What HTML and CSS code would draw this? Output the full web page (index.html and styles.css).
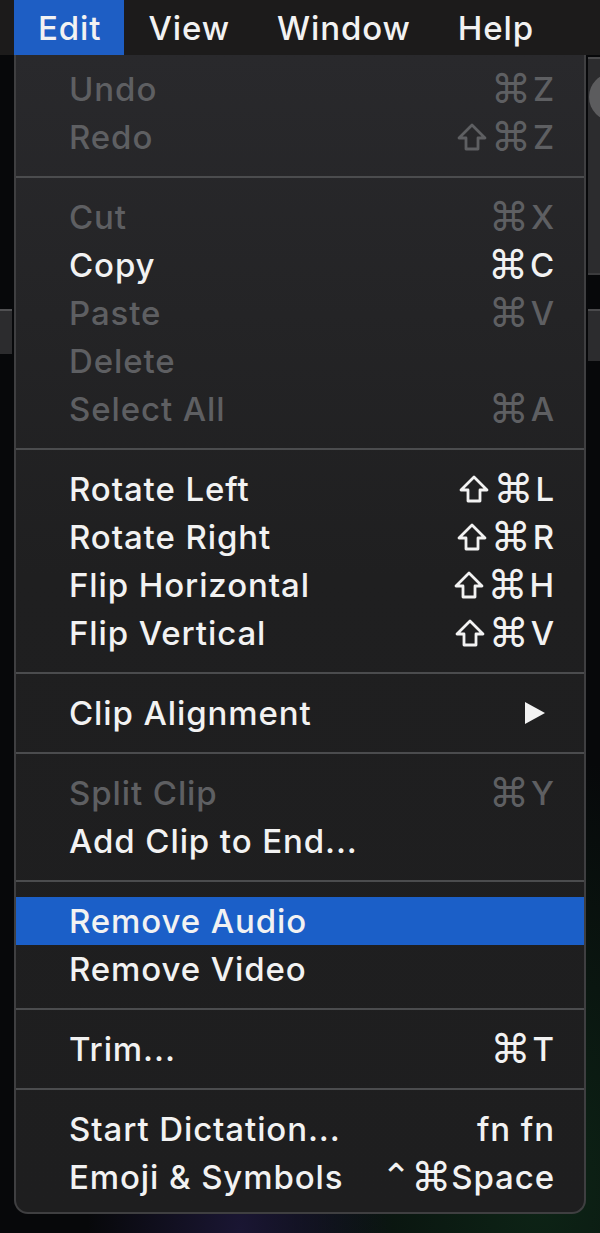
FILE: index.html
```html
<!DOCTYPE html>
<html lang="en">
<head>
<meta charset="UTF-8">
<meta name="viewport" content="width=device-width, initial-scale=1.0">
<title>Edit Menu</title>
<link rel="stylesheet" href="styles.css">
</head>
<body>
  <!-- bits of the windows behind the menu -->
  <div class="desktop">
    <div class="win win-left"></div>
    <div class="win win-right-top"><span class="knob"></span></div>
    <div class="win win-right-mid"></div>
    <div class="win win-right-low"></div>
    <div class="glow"></div>
  </div>

  <div class="menubar">
    <span class="menubar-item active">Edit</span>
    <span class="menubar-item">View</span>
    <span class="menubar-item">Window</span>
    <span class="menubar-item">Help</span>
  </div>

  <div class="menu">
    <div class="item disabled"><span class="label">Undo</span><span class="keys"><span class="cmd">⌘</span>Z</span></div>
    <div class="item disabled"><span class="label">Redo</span><span class="keys"><svg class="shift" width="30" height="28" viewBox="0 0 30 28"><path d="M15 2 L28 15 L21 15 L21 26 L9 26 L9 15 L2 15 Z"/></svg><span class="cmd">⌘</span>Z</span></div>
    <div class="sep"></div>
    <div class="item disabled"><span class="label">Cut</span><span class="keys"><span class="cmd">⌘</span>X</span></div>
    <div class="item"><span class="label">Copy</span><span class="keys"><span class="cmd">⌘</span>C</span></div>
    <div class="item disabled"><span class="label">Paste</span><span class="keys"><span class="cmd">⌘</span>V</span></div>
    <div class="item disabled"><span class="label">Delete</span></div>
    <div class="item disabled"><span class="label">Select All</span><span class="keys"><span class="cmd">⌘</span>A</span></div>
    <div class="sep"></div>
    <div class="item"><span class="label">Rotate Left</span><span class="keys"><svg class="shift" width="30" height="28" viewBox="0 0 30 28"><path d="M15 2 L28 15 L21 15 L21 26 L9 26 L9 15 L2 15 Z"/></svg><span class="cmd">⌘</span>L</span></div>
    <div class="item"><span class="label">Rotate Right</span><span class="keys"><svg class="shift" width="30" height="28" viewBox="0 0 30 28"><path d="M15 2 L28 15 L21 15 L21 26 L9 26 L9 15 L2 15 Z"/></svg><span class="cmd">⌘</span>R</span></div>
    <div class="item"><span class="label">Flip Horizontal</span><span class="keys"><svg class="shift" width="30" height="28" viewBox="0 0 30 28"><path d="M15 2 L28 15 L21 15 L21 26 L9 26 L9 15 L2 15 Z"/></svg><span class="cmd">⌘</span>H</span></div>
    <div class="item"><span class="label">Flip Vertical</span><span class="keys"><svg class="shift" width="30" height="28" viewBox="0 0 30 28"><path d="M15 2 L28 15 L21 15 L21 26 L9 26 L9 15 L2 15 Z"/></svg><span class="cmd">⌘</span>V</span></div>
    <div class="sep"></div>
    <div class="item"><span class="label">Clip Alignment</span>
      <svg class="arrow" width="22" height="24" viewBox="0 0 22 24"><path d="M1 1 L21 12 L1 23 Z" fill="#f2f2f2"/></svg>
    </div>
    <div class="sep"></div>
    <div class="item disabled"><span class="label">Split Clip</span><span class="keys"><span class="cmd">⌘</span>Y</span></div>
    <div class="item"><span class="label">Add Clip to End...</span></div>
    <div class="sep"></div>
    <div class="item selected"><span class="label">Remove Audio</span></div>
    <div class="item"><span class="label">Remove Video</span></div>
    <div class="sep"></div>
    <div class="item"><span class="label">Trim...</span><span class="keys"><span class="cmd">⌘</span>T</span></div>
    <div class="sep"></div>
    <div class="item"><span class="label">Start Dictation...</span><span class="keys">fn fn</span></div>
    <div class="item"><span class="label">Emoji &amp; Symbols</span><span class="keys"><span class="ctrl">⌃</span><span class="cmd tight">⌘</span>Space</span></div>
  </div>
</body>
</html>
```

FILE: styles.css
```css
body {
  margin: 0;
  height: 1233px;
  background-color: #07080a;
  font-family: Inter, "Liberation Sans", sans-serif;
  font-size: 33px;
  letter-spacing: 0.9px;
  color: #f2f2f2;
  position: relative;
  overflow: hidden;
}

/* windows peeking out behind the menu */
.desktop .win {
  position: absolute;
  background-color: #2c2c2e;
}

.win-left {
  left: 0;
  top: 309px;
  width: 12px;
  height: 43px;
  border-top: 2px solid #505052;
}

.win-right-top {
  left: 588px;
  top: 57px;
  width: 12px;
  height: 96px;
  border-top: 2px solid #4a4a4c;
  overflow: hidden;
}

.knob {
  position: absolute;
  left: 1px;
  top: 14px;
  width: 48px;
  height: 48px;
  border-radius: 50%;
  background-color: #5c5c5e;
}

.win-right-mid {
  left: 588px;
  top: 155px;
  width: 12px;
  height: 118px;
  background-color: #1c1c1e;
  border-bottom: 2px solid #3c3c3e;
}

.win-right-low {
  left: 588px;
  top: 309px;
  width: 12px;
  height: 50px;
  border-top: 2px solid #4a4a4c;
}

.glow {
  position: absolute;
  left: 0;
  top: 420px;
  width: 600px;
  height: 813px;
  background: radial-gradient(ellipse at 40% 100%, #1a1633 0%, transparent 30%),
              radial-gradient(ellipse at 90% 95%, #0d2416 0%, transparent 40%);
}

/* top menu bar */
.menubar {
  position: relative;
  display: flex;
  height: 55px;
  padding-left: 14px;
  background-color: #1c1b1b;
}

.menubar-item {
  display: flex;
  align-items: center;
  padding: 0 23px 0 24px;
  font-weight: 500;
}

.menubar-item.active {
  background-color: #1e5ec4;
}

/* drop-down menu */
.menu {
  position: relative;
  margin-left: 14px;
  width: 568px;
  padding: 10px 0 11px;
  background: linear-gradient(#29292c, #1f1f20 45%, #1e1e1f);
  border: 2px solid #3f3f41;
  border-top: none;
  border-radius: 0 0 14px 14px;
}

.item {
  display: flex;
  align-items: center;
  justify-content: space-between;
  height: 48px;
  padding: 0 29px 0 53px;
  font-weight: 500;
}

.item.disabled {
  color: #5e5f62;
}

.item.selected {
  background-color: #1b5fc8;
}

.keys {
  display: flex;
  align-items: center;
  height: 48px;
}

.cmd,
.ctrl {
  font-family: "DejaVu Sans", sans-serif;
  font-size: 40px;
  letter-spacing: 0;
  line-height: 1;
  margin-right: 2px;
}

.cmd.tight {
  margin-right: 0;
}

.ctrl {
  font-size: 36px;
  margin-right: 0;
}

.shift {
  margin-right: 4px;
  fill: none;
  stroke: currentColor;
  stroke-width: 2.8;
  stroke-linejoin: round;
}

.arrow {
  margin-right: 9px;
}

.sep {
  height: 2px;
  margin: 15px 0;
  background-color: #4b4c4e;
}
```
